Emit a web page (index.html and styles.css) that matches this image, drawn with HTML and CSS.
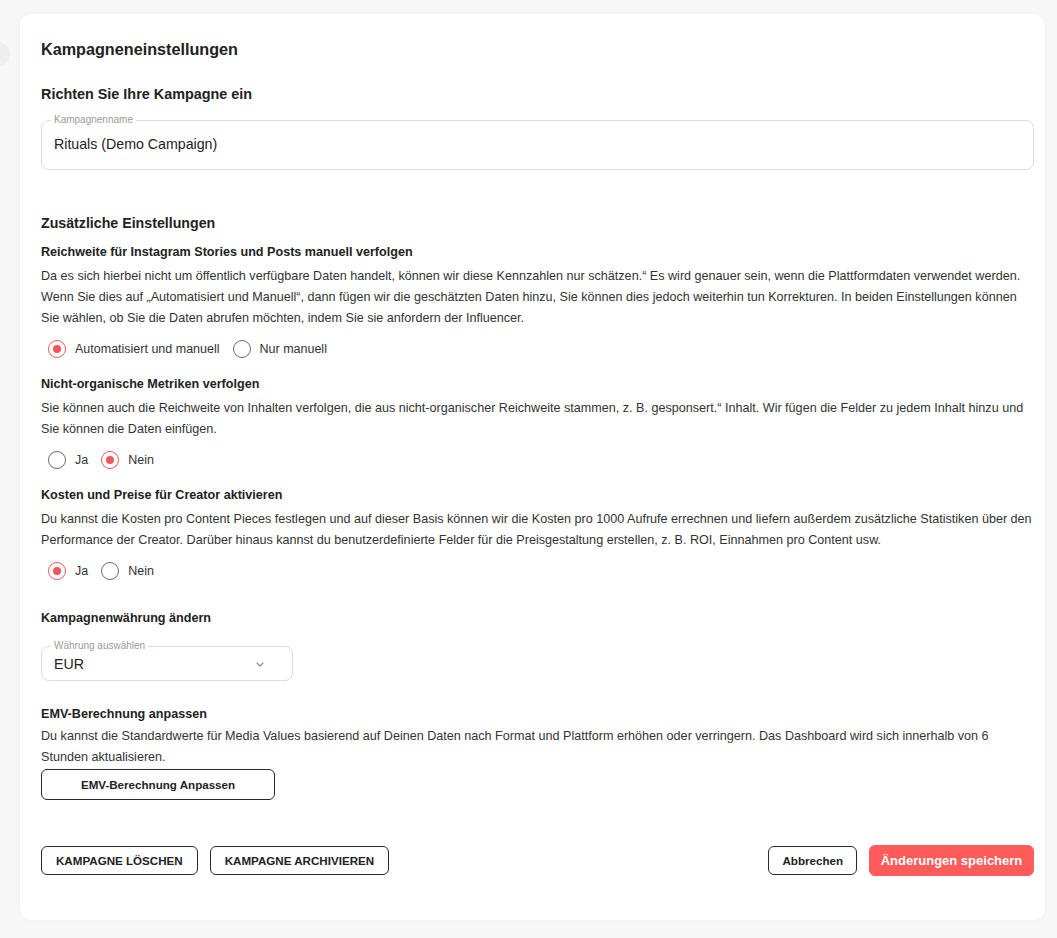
FILE: index.html
```html
<!DOCTYPE html>
<html lang="de">
<head>
<meta charset="utf-8">
<title>Kampagneneinstellungen</title>
<link rel="stylesheet" href="styles.css">
</head>
<body>
<div class="side-dot"></div>
<main class="card">
  <h1 class="title">Kampagneneinstellungen</h1>
  <h2 class="subtitle">Richten Sie Ihre Kampagne ein</h2>
  <fieldset class="field field-name">
    <legend>Kampagnenname</legend>
    <div class="field-value">Rituals (Demo Campaign)</div>
  </fieldset>

  <h3 class="section-title">Zusätzliche Einstellungen</h3>

  <section class="setting">
    <h4 class="setting-title">Reichweite für Instagram Stories und Posts manuell verfolgen</h4>
    <p class="setting-text">Da es sich hierbei nicht um öffentlich verfügbare Daten handelt, können wir diese Kennzahlen nur schätzen.“ Es wird genauer sein, wenn die Plattformdaten verwendet werden. Wenn Sie dies auf „Automatisiert und Manuell“, dann fügen wir die geschätzten Daten hinzu, Sie können dies jedoch weiterhin tun Korrekturen. In beiden Einstellungen können Sie wählen, ob Sie die Daten abrufen möchten, indem Sie sie anfordern der Influencer.</p>
    <div class="radios">
      <label class="radio"><span class="dot checked"></span>Automatisiert und manuell</label>
      <label class="radio"><span class="dot"></span>Nur manuell</label>
    </div>
  </section>

  <section class="setting">
    <h4 class="setting-title">Nicht-organische Metriken verfolgen</h4>
    <p class="setting-text">Sie können auch die Reichweite von Inhalten verfolgen, die aus nicht-organischer Reichweite stammen, z. B. gesponsert.“ Inhalt. Wir fügen die Felder zu jedem Inhalt hinzu und Sie können die Daten einfügen.</p>
    <div class="radios">
      <label class="radio"><span class="dot"></span>Ja</label>
      <label class="radio"><span class="dot checked"></span>Nein</label>
    </div>
  </section>

  <section class="setting">
    <h4 class="setting-title">Kosten und Preise für Creator aktivieren</h4>
    <p class="setting-text">Du kannst die Kosten pro Content Pieces festlegen und auf dieser Basis können wir die Kosten pro 1000 Aufrufe errechnen und liefern außerdem zusätzliche Statistiken über den Performance der Creator. Darüber hinaus kannst du benutzerdefinierte Felder für die Preisgestaltung erstellen, z. B. ROI, Einnahmen pro Content usw.</p>
    <div class="radios">
      <label class="radio"><span class="dot checked"></span>Ja</label>
      <label class="radio"><span class="dot"></span>Nein</label>
    </div>
  </section>

  <section class="setting currency">
    <h4 class="setting-title">Kampagnenwährung ändern</h4>
    <fieldset class="field field-select">
      <legend>Währung auswählen</legend>
      <div class="select-row">
        <span class="field-value">EUR</span>
        <svg class="chevron" width="8" height="5" viewBox="0 0 8 5"><path d="M1 1l3 3 3-3" fill="none" stroke="#888" stroke-width="1.1" stroke-linecap="round" stroke-linejoin="round"/></svg>
      </div>
    </fieldset>
  </section>

  <section class="setting emv">
    <h4 class="setting-title">EMV-Berechnung anpassen</h4>
    <p class="setting-text">Du kannst die Standardwerte für Media Values basierend auf Deinen Daten nach Format und Plattform erhöhen oder verringern. Das Dashboard wird sich innerhalb von 6 Stunden aktualisieren.</p>
    <button class="btn btn-wide">EMV-Berechnung Anpassen</button>
  </section>

  <footer class="actions">
    <div class="actions-left">
      <button class="btn btn-caps">KAMPAGNE LÖSCHEN</button>
      <button class="btn btn-caps">KAMPAGNE ARCHIVIEREN</button>
    </div>
    <div class="actions-right">
      <button class="btn btn-cancel">Abbrechen</button>
      <button class="btn btn-primary">Änderungen speichern</button>
    </div>
  </footer>
</main>
</body>
</html>
```
FILE: styles.css
```css
* { box-sizing: border-box; }

html, body {
  margin: 0;
  padding: 0;
}

body {
  background: #f7f7f8;
  font-family: "Liberation Sans", Arial, Helvetica, sans-serif;
  color: #2b2b2b;
  min-height: 938px;
  position: relative;
  overflow: hidden;
}

.side-dot {
  position: absolute;
  left: -14px;
  top: 42px;
  width: 24px;
  height: 24px;
  border-radius: 50%;
  background: #eeeeef;
}

.card {
  margin: 14px 0 0 20px;
  width: 1025px;
  height: 906px;
  background: #fff;
  border-radius: 12px;
  box-shadow: 0 0 6px rgba(0,0,0,0.03);
  padding: 25px 10px 0 21px;
  display: flex;
  flex-direction: column;
}

.title {
  margin: 0;
  font-size: 16.2px;
  line-height: 20px;
  font-weight: 700;
  color: #222;
}

.subtitle {
  margin: 25px 0 0;
  font-size: 14.4px;
  line-height: 20px;
  font-weight: 700;
  color: #222;
}

.field {
  margin: 10px 0 0;
  border: 1px solid #dcdcdc;
  border-radius: 8px;
  padding: 0 12px;
  min-width: 0;
}

.field legend {
  font-size: 10px;
  line-height: 12px;
  color: #9a9a9a;
  padding: 0 3px;
  margin-left: -3px;
}

.field-value {
  font-size: 14.2px;
  line-height: 20px;
  color: #222;
}

.field-name {
  width: 993px;
  padding-top: 8px;
  padding-bottom: 15px;
}

.section-title {
  margin: 43px 0 0;
  font-size: 14.2px;
  line-height: 20px;
  font-weight: 700;
  color: #222;
}

.setting { margin-top: 14px; }
.setting:first-of-type { margin-top: 10px; }

.setting-title {
  margin: 0;
  font-size: 12.6px;
  line-height: 18px;
  font-weight: 700;
  color: #222;
}

.setting-text {
  margin: 5px 0 0;
  width: 993px;
  font-size: 12.6px;
  line-height: 21px;
  color: #333;
}

.radios {
  display: flex;
  margin-top: 8px;
  height: 24px;
  align-items: center;
}

.radio {
  display: flex;
  align-items: center;
  padding-left: 7px;
  margin-right: 6px;
  font-size: 12.5px;
  color: #333;
  gap: 9px;
}

.dot {
  width: 18px;
  height: 18px;
  border-radius: 50%;
  border: 1.5px solid #6b6b6b;
  display: inline-flex;
  align-items: center;
  justify-content: center;
}

.dot.checked {
  border-color: #f25757;
}

.dot.checked::after {
  content: "";
  width: 8px;
  height: 8px;
  border-radius: 50%;
  background: #f25757;
}

.currency { margin-top: 26px; }

.field-select {
  width: 252px;
  margin-top: 13px;
  padding-top: 2px;
  padding-bottom: 6px;
}

.select-row {
  display: flex;
  align-items: center;
  justify-content: space-between;
  padding-right: 16px;
}

.chevron { margin-top: 1px; }

.emv { margin-top: 24px; }

.emv .setting-text { margin-top: 3px; }

.btn {
  font-family: "Liberation Sans", Arial, Helvetica, sans-serif;
  background: #fff;
  border: 1px solid #2a2a2a;
  border-radius: 6px;
  color: #222;
  font-weight: 700;
  cursor: pointer;
}

.btn-wide {
  margin-top: 1px;
  width: 234px;
  height: 31px;
  font-size: 11.6px;
}

.actions {
  display: flex;
  justify-content: space-between;
  align-items: center;
  margin-top: 45px;
  width: 993px;
}

.actions-left, .actions-right {
  display: flex;
  align-items: center;
  gap: 12px;
}

.btn-caps {
  height: 29px;
  font-size: 11.6px;
  padding: 0 14px;
}

.btn-cancel {
  height: 29px;
  font-size: 11.6px;
  padding: 0 13px;
}

.btn-primary {
  height: 31px;
  width: 165px;
  font-size: 13px;
  background: #ff5b5b;
  border-color: #ff5b5b;
  color: #fff;
}
```
